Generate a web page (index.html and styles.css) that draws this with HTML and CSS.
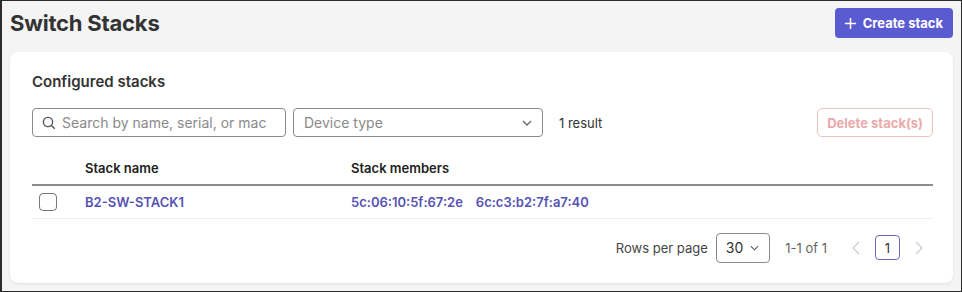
FILE: index.html
```html
<!DOCTYPE html>
<html lang="en">
<head>
  <meta charset="UTF-8">
  <meta name="viewport" content="width=device-width, initial-scale=1.0">
  <title>Switch Stacks</title>
  <link rel="stylesheet" href="styles.css">
</head>
<body>
  <div class="frame">
    <div class="page-head">
      <h1>Switch Stacks</h1>
      <button class="btn-primary">
        <svg width="13" height="13" viewBox="0 0 14 14"><path d="M7 1v12M1 7h12" stroke="#fff" stroke-width="1.6" fill="none"/></svg>
        Create stack
      </button>
    </div>

    <div class="card">
      <h2>Configured stacks</h2>

      <div class="toolbar">
        <div class="input search">
          <svg width="14" height="14" viewBox="0 0 14 14"><circle cx="6" cy="6" r="4.6" stroke="#555" stroke-width="1.4" fill="none"/><path d="M9.4 9.4l3.4 3.4" stroke="#555" stroke-width="1.4"/></svg>
          <span class="placeholder">Search by name, serial, or mac</span>
        </div>
        <div class="input select">
          <span class="placeholder">Device type</span>
          <svg width="10" height="6" viewBox="0 0 10 6"><path d="M1 1l4 4 4-4" stroke="#666" stroke-width="1.3" fill="none"/></svg>
        </div>
        <span class="count">1 result</span>
        <button class="btn-danger">Delete stack(s)</button>
      </div>

      <table>
        <thead>
          <tr>
            <th class="col-check"></th>
            <th class="col-name">Stack name</th>
            <th>Stack members</th>
          </tr>
        </thead>
        <tbody>
          <tr>
            <td class="col-check"><span class="checkbox"></span></td>
            <td class="col-name"><a href="#">B2-SW-STACK1</a></td>
            <td><a href="#">5c:06:10:5f:67:2e</a><a href="#" class="member">6c:c3:b2:7f:a7:40</a></td>
          </tr>
        </tbody>
      </table>

      <div class="pager">
        <span>Rows per page</span>
        <div class="rows-select">
          30
          <svg width="9" height="6" viewBox="0 0 10 6"><path d="M1 1l4 4 4-4" stroke="#666" stroke-width="1.3" fill="none"/></svg>
        </div>
        <span class="range">1-1 of 1</span>
        <svg class="arrow" width="8" height="14" viewBox="0 0 8 14"><path d="M7 1L1 7l6 6" stroke="#ccc" stroke-width="1.4" fill="none"/></svg>
        <span class="page-num">1</span>
        <svg class="arrow" width="8" height="14" viewBox="0 0 8 14"><path d="M1 1l6 6-6 6" stroke="#ccc" stroke-width="1.4" fill="none"/></svg>
      </div>
    </div>
  </div>
</body>
</html>
```

FILE: styles.css
```css
* {
  box-sizing: border-box;
}
body {
  margin: 0;
  font-family: Inter, "Open Sans", Arial, sans-serif;
  color: #222;
}
.frame {
  width: 962px;
  height: 292px;
  background: #f4f4f5;
  border: 1px solid #2b2b2b;
  border-left-width: 2px;
  padding: 0 8px 0 8px;
}
.page-head {
  display: flex;
  justify-content: space-between;
  align-items: center;
  height: 44px;
}
h1 {
  margin: 0;
  font-size: 22px;
  font-weight: 700;
  color: #333;
  letter-spacing: -0.2px;
}
.btn-primary {
  display: flex;
  align-items: center;
  gap: 6px;
  height: 30px;
  padding: 0 10px 0 9px;
  background: #5b5bd1;
  color: #fff;
  border: none;
  border-radius: 4px;
  font-family: inherit;
  font-size: 13px;
  font-weight: 700;
}
.card {
  margin-top: 7px;
  background: #fff;
  border-radius: 8px;
  box-shadow: 0 1px 3px rgba(0, 0, 0, 0.08);
  padding: 20px 20px 21px 22px;
  height: 231px;
}
h2 {
  margin: 0;
  font-size: 15px;
  font-weight: 600;
  color: #333;
  line-height: 20px;
}
.toolbar {
  display: flex;
  align-items: center;
  margin-top: 16px;
  height: 29px;
}
.input {
  display: flex;
  align-items: center;
  height: 29px;
  border: 1px solid #8a8a8a;
  border-radius: 4px;
  font-size: 14px;
}
.placeholder {
  color: #8a8a8a;
}
.search {
  width: 254px;
  gap: 6px;
  padding-left: 9px;
}
.select {
  width: 250px;
  margin-left: 7px;
  padding: 0 10px;
  justify-content: space-between;
}
.count {
  margin-left: 16px;
  font-size: 13px;
  color: #333;
}
.btn-danger {
  margin-left: auto;
  height: 29px;
  padding: 0 9px;
  background: #fff;
  border: 1px solid #efc2c2;
  border-radius: 5px;
  color: #ebaaaa;
  font-family: inherit;
  font-size: 13px;
  font-weight: 700;
}
table {
  width: 100%;
  border-collapse: collapse;
  margin-top: 19px;
  font-size: 13px;
}
th {
  text-align: left;
  font-weight: 600;
  height: 29px;
  padding: 0 0 8px;
  border-bottom: 2px solid #8c8c8c;
  vertical-align: bottom;
}
td {
  height: 33px;
  border-bottom: 1px solid #eee;
  padding: 0;
}
.col-check {
  width: 53px;
  padding-left: 7px;
}
.col-name {
  width: 266px;
}
.checkbox {
  display: block;
  width: 18px;
  height: 18px;
  border: 1.5px solid #777;
  border-radius: 4px;
}
a {
  color: #5653b3;
  font-weight: 600;
  text-decoration: none;
}
.member {
  margin-left: 13px;
}
.pager {
  display: flex;
  align-items: center;
  justify-content: flex-end;
  margin-top: 14px;
  font-size: 13px;
  color: #444;
  padding-right: 10px;
}
.rows-select {
  display: flex;
  align-items: center;
  gap: 7px;
  height: 30px;
  margin-left: 8px;
  padding: 0 10px 0 9px;
  border: 1px solid #8a8a8a;
  border-radius: 4px;
  color: #333;
  font-size: 14px;
}
.range {
  margin-left: 15px;
  color: #666;
}
.arrow {
  margin-left: 25px;
}
.page-num {
  display: flex;
  align-items: center;
  justify-content: center;
  width: 25px;
  height: 25px;
  margin-left: 15px;
  border: 1px solid #6b68c4;
  border-radius: 4px;
  color: #333;
  margin-right: -5px;
}
.page-num + .arrow {
  margin-left: 20px;
}
```
